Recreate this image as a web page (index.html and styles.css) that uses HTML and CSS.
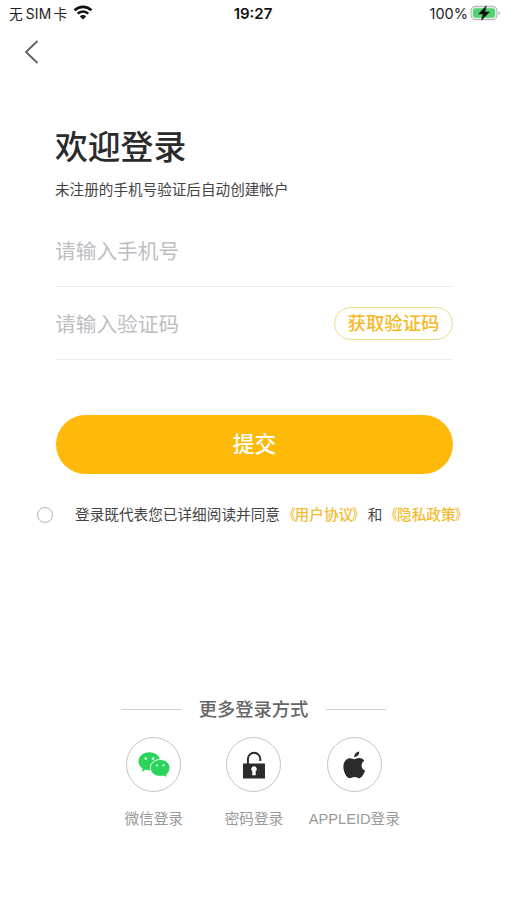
FILE: index.html
```html
<!DOCTYPE html>
<html lang="zh-CN">
<head>
<meta charset="utf-8">
<meta name="viewport" content="width=device-width, initial-scale=1">
<title>欢迎登录</title>
<link rel="stylesheet" href="styles.css">
</head>
<body>
<div class="screen">
  <header class="status">
    <div class="status-left">
      <span class="carrier">无<span class="sim">SIM</span>卡</span>
      <svg class="wifi" width="20" height="15" viewBox="0 0 20 15" fill="none" stroke="#111" stroke-width="2.6">
        <path d="M1.6 5.3a12 12 0 0 1 16.8 0"/>
        <path d="M4.7 8.7a7.5 7.5 0 0 1 10.6 0"/>
        <path d="M10 14.5 6.9 11.4a4.4 4.4 0 0 1 6.2 0z" fill="#111" stroke="none"/>
      </svg>
    </div>
    <time class="clock">19:27</time>
    <div class="status-right">
      <span>100%</span>
      <svg class="battery" width="31" height="16" viewBox="0 0 31 16">
        <rect x="1" y="1.3" width="26" height="13.4" rx="4.2" fill="#e3efe5" stroke="#a9b3aa"/>
        <rect x="3" y="3.3" width="22" height="9.4" rx="2.4" fill="#52d373"/>
        <path d="M28.6 5.9c1.7.6 1.7 3.6 0 4.200z" fill="#a9b3aa"/>
        <path d="M16.400.8 8.600 8.900h4.500l-1.700 6.300 8-8.300h-4.600z" fill="#111" stroke="#111" stroke-width=".5"/>
      </svg>
    </div>
  </header>
  <nav class="nav">
    <svg width="16" height="26" viewBox="0 0 16 26" fill="none" stroke="#606060" stroke-width="1.8"><path d="M13.500 2 2 13l11.500 11"/></svg>
  </nav>
  <main class="form">
    <h1 class="title">欢迎登录</h1>
    <p class="subtitle">未注册的手机号验证后自动创建帐户</p>
    <div class="field field-phone"><span>请输入手机号</span></div>
    <div class="field field-code"><span>请输入验证码</span><button class="get-code">获取验证码</button></div>
    <button class="submit">提交</button>
  </main>
  <div class="agree">
    <span class="radio"></span>
    <p class="agree-text">登录既代表您已详细阅读并同意<a><span class="open">《</span>用户协议<span class="close">》</span></a>和<a><span class="open">《</span>隐私政策<span class="close">》</span></a></p>
  </div>
  <section class="more">
    <h2 class="more-title">更多登录方式</h2>
    <div class="methods">
      <div class="method">
        <span class="circle">
          <svg width="54" height="54" viewBox="0 0 54 54">
            <path d="M22.300 14.200c-6.200 0-10.800 4-10.800 9.100 0 3 1.500 5.500 4.100 7.200l-1 3.300 4-2.100c1.200.3 2.400.5 3.700.5 6.300 0 11-3.900 11-8.900s-4.700-9.100-11-9.100z" fill="#2bd45b"/>
            <path d="M33.300 21.500c-5.700 0-10 3.700-10 8.400s4.300 8.500 10 8.500c1.200 0 2.300-.2 3.300-.4l3.500 2-.8-3.100c2.300-1.600 3.700-4.100 3.700-7 0-4.700-4.200-8.400-9.700-8.400z" fill="#2bd45b" stroke="#fff" stroke-width="1"/>
            <g fill="#d5ffe0"><circle cx="18.700" cy="20.600" r="1.300"/><circle cx="26" cy="20.600" r="1.300"/><circle cx="30" cy="27.400" r="1.100"/><circle cx="36.500" cy="27.400" r="1.100"/></g>
          </svg>
        </span>
        <span class="label">微信登录</span>
      </div>
      <div class="method">
        <span class="circle">
          <svg width="54" height="54" viewBox="0 0 54 54">
            <path d="M20.900 27v-6a6.200 6.200 0 0 1 12.400 0v2" fill="none" stroke="#2b2b2b" stroke-width="2"/>
            <rect x="16" y="25.500" width="22" height="15" rx=".6" fill="#2b2b2b"/>
            <path d="M27 28.300a2.800 2.800 0 0 1 1.700 5v4h-3.400v-4a2.800 2.800 0 0 1 1.700-5z" fill="#fff"/>
          </svg>
        </span>
        <span class="label">密码登录</span>
      </div>
      <div class="method">
        <span class="circle">
          <svg width="54" height="54" viewBox="0 0 54 54" fill="#2b2b2b">
            <path d="M27.300 21.200c1.300 0 2.700-1.200 5-1.200 2.100 0 3.900 1 5 2.700-4 2.400-3.500 8.200.8 9.900-.8 2.500-2.900 6.900-5.300 7.500-1.900.3-3-1-5.200-1s-3.500 1.300-5.200 1c-3.600-1-6.300-7.500-6-12.200.3-4.400 3.200-7.700 6.600-7.700 1.900 0 3.200 1 4.300 1z"/>
            <path d="M32.200 13.600c.3 2.800-1.900 5.600-4.900 5.600-.2-2.800 2.100-5.300 4.900-5.600z"/>
          </svg>
        </span>
        <span class="label">APPLEID登录</span>
      </div>
    </div>
  </section>
</div>
</body>
</html>
```
FILE: styles.css
```css
* { box-sizing: border-box; }
body {
  margin: 0;
  background: #fff;
  color: #333;
  font-family: "Liberation Sans", "Noto Sans CJK SC", sans-serif;
}
h1, h2, p { margin: 0; font-weight: 400; }
button { font-family: inherit; padding: 0; }
svg { display: block; flex: none; }
.screen { width: 507px; height: 900px; overflow: hidden; display: flex; flex-direction: column; }

.status {
  height: 28px;
  padding: 0 6px 0 9px;
  display: grid;
  grid-template-columns: 1fr auto 1fr;
  align-items: center;
  font: 14.5px/28px Inter, "Noto Sans CJK SC", sans-serif;
  color: #222;
  white-space: nowrap;
}
.status-left, .status-right { display: flex; align-items: center; }
.status-left { gap: 6px; }
.carrier { font-size: 13.8px; }
.sim { margin: 0 2px 0 3px; letter-spacing: .2px; }
.wifi { margin-top: -4px; }
.clock { font-weight: 600; font-size: 15px; color: #111; margin-right: 4px; }
.status-right { justify-content: flex-end; gap: 2px; }
.battery { margin-top: -2px; }

.nav { height: 48px; padding: 11px 0 0 24px; }

.form { padding: 0 54px 0 55px; display: flex; flex-direction: column; }
.title { margin-top: 47px; font-size: 32.8px; line-height: 50px; font-weight: 500; color: #2b2b2b; }
.subtitle { margin-top: 5px; font-size: 14.6px; line-height: 24px; color: #444; }
.field {
  display: flex;
  align-items: center;
  justify-content: space-between;
  border-bottom: 1px solid #ededed;
  font-size: 20.7px;
  line-height: 30px;
  color: #bebec2;
}
.field-phone { height: 85px; padding-top: 16px; }
.field-code { height: 73px; padding-top: 4px; }
.get-code {
  width: 119px;
  height: 33px;
  margin-bottom: 4px;
  border: 1px solid #ecdc8c;
  border-radius: 17px;
  background: #fff;
  color: #f5b925;
  font-size: 18.4px;
  line-height: 29px;
  font-weight: 500;
}
.submit {
  margin: 55px 0 0 1px;
  height: 59px;
  border: 0;
  border-radius: 30px;
  background: #ffb908;
  color: #fff;
  font-size: 21.7px;
  line-height: 57px;
  font-weight: 500;
}

.agree { height: 24px; margin-top: 29px; padding-left: 37px; display: flex; align-items: center; }
.radio { width: 16px; height: 16px; margin: 0 22px 1px 0; border: 1px solid #b5b5b5; border-radius: 50%; }
.agree-text { font-size: 14.65px; line-height: 24px; color: #444; white-space: nowrap; }
.agree-text a { color: #f4bb32; font-weight: 500; }
.open, .close { display: inline-block; width: 14.65px; }
.open { transform: translateX(1px) scaleX(.8); transform-origin: right; }
.close { transform: translateX(-1px) scaleX(.8); transform-origin: left; }

.more { margin-top: 169px; padding: 0 121px; }
.more-title {
  height: 28px;
  display: flex;
  align-items: center;
  justify-content: space-between;
  font-size: 18.3px;
  line-height: 28px;
  font-weight: 500;
  color: #666;
}
.more-title::before, .more-title::after { content: ""; width: 60px; height: 1px; margin-bottom: 1px; background: #cfcfcf; }
.methods { display: flex; justify-content: center; margin: 13px -19px 0 -18px; }
.method { width: 100.3px; flex: none; display: flex; flex-direction: column; align-items: center; }
.circle { width: 55px; height: 55px; border: 1px solid #c4c4c4; border-radius: 50%; display: flex; align-items: center; justify-content: center; }
.label { margin-top: 15px; font-size: 14.65px; line-height: 24px; color: #999; white-space: nowrap; }
```
